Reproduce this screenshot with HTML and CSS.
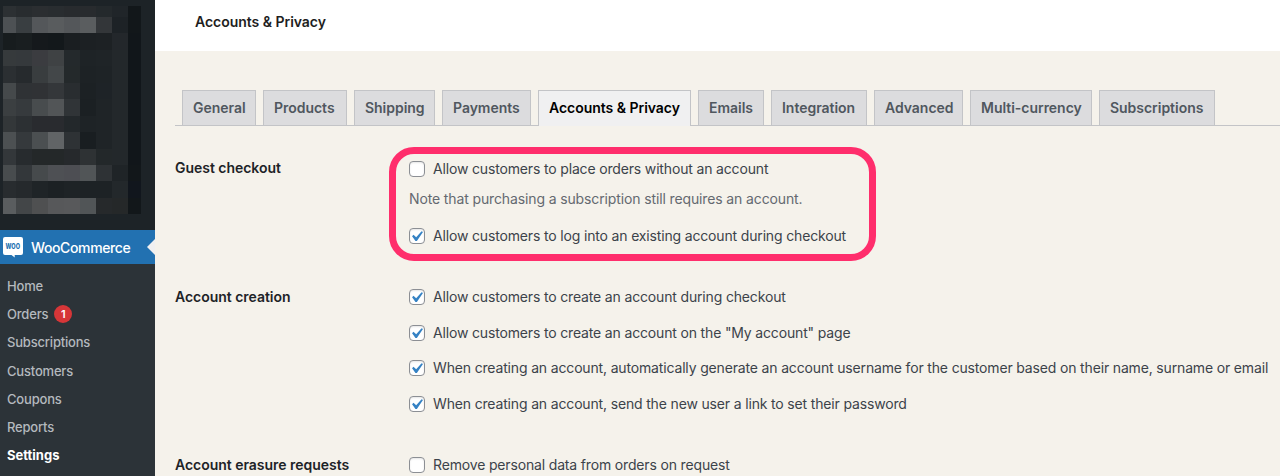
FILE: index.html
```html
<!DOCTYPE html>
<html lang="en">
<head>
<meta charset="utf-8">
<title>Accounts &amp; Privacy</title>
<link rel="stylesheet" href="styles.css">
</head>
<body>
<svg class="sprite" width="0" height="0"><symbol id="tick" viewBox="0 0 20 20"><path d="M14.830 4.890l1.340.940-5.810 8.380H9.020L5.780 9.670l1.340-1.250 2.570 2.400z"/></symbol></svg>
<div class="app">
  <aside class="sidebar">
    <div class="mosaic" id="mosaic"></div>
    <a class="brand">
      <svg class="brand-icon" width="20" height="21" viewBox="0 0 20 21"><path fill="#fff" d="M2 0h16a2 2 0 0 1 2 2v14a2 2 0 0 1-2 2h-6.300v2.500L8.500 18H2a2 2 0 0 1-2-2V2a2 2 0 0 1 2-2z"/><text x="2.600" y="11.500" textLength="14.400" lengthAdjust="spacingAndGlyphs">WOO</text></svg>
      <span class="brand-name">WooCommerce</span>
      <span class="brand-arrow"></span>
    </a>
    <nav class="menu">
      <a>Home</a>
      <a>Orders<b class="count">1</b></a>
      <a>Subscriptions</a>
      <a>Customers</a>
      <a>Coupons</a>
      <a>Reports</a>
      <a class="current">Settings</a>
    </nav>
  </aside>
  <main class="main">
    <header class="header"><h1>Accounts &amp; Privacy</h1></header>
    <nav class="tabs">
      <a class="w74">General</a>
      <a class="w84">Products</a>
      <a class="w81">Shipping</a>
      <a class="w89">Payments</a>
      <a class="w153 active">Accounts &amp; Privacy</a>
      <a class="w66">Emails</a>
      <a class="w96">Integration</a>
      <a class="w89">Advanced</a>
      <a class="w122">Multi-currency</a>
      <a class="w116">Subscriptions</a>
    </nav>
    <section class="group guest">
      <h2>Guest checkout</h2>
      <div class="fields">
        <label><i class="box"></i>Allow customers to place orders without an account</label>
        <p>Note that purchasing a subscription still requires an account.</p>
        <label><i class="box"><svg><use href="#tick"/></svg></i>Allow customers to log into an existing account during checkout</label>
        <div class="highlight"></div>
      </div>
    </section>
    <section class="group creation">
      <h2>Account creation</h2>
      <div class="fields">
        <label><i class="box"><svg><use href="#tick"/></svg></i>Allow customers to create an account during checkout</label>
        <label><i class="box"><svg><use href="#tick"/></svg></i>Allow customers to create an account on the "My account" page</label>
        <label><i class="box"><svg><use href="#tick"/></svg></i>When creating an account, automatically generate an account username for the customer based on their name, surname or email</label>
        <label><i class="box"><svg><use href="#tick"/></svg></i>When creating an account, send the new user a link to set their password</label>
      </div>
    </section>
    <section class="group erasure">
      <h2>Account erasure requests</h2>
      <div class="fields">
        <label><i class="box"></i>Remove personal data from orders on request</label>
      </div>
    </section>
  </main>
</div>
<script src="app.js"></script>
</body>
</html>
```

FILE: styles.css
```css
* { box-sizing: border-box; }
body { margin: 0; background: #f5f2eb; font: 14px/20px Inter, "Liberation Sans", sans-serif; color: #3c434a; }
h1, h2, p { margin: 0; font-size: 14px; }
.sprite { position: absolute; }
.app { display: flex; width: 1280px; height: 476px; overflow: hidden; }
.sidebar { width: 155px; flex: none; background: #1d2327; padding-top: 6px; display: flex; flex-direction: column; }
.mosaic { flex: none; margin-left: 3px; width: 138px; height: 208.500px; display: grid; grid-template-columns: 13px repeat(7, 16px) 13px; grid-template-rows: 11px repeat(12, 16.450px); }
.brand { position: relative; flex: none; display: flex; align-items: center; height: 34px; margin-top: 15.500px; padding-left: 3px; background: #2271b1; color: #fff; }
.brand-icon { display: block; overflow: visible; }
.brand-icon text { font: 800 7.500px Inter, sans-serif; fill: #2271b1; }
.brand-name { margin: 1px 0 0 8px; font-weight: 500; letter-spacing: -0.380px; }
.brand-arrow { position: absolute; right: 0; top: 9px; border: 8px solid transparent; border-left: 0; border-right-color: #f0f0f1; }
.menu { flex: 1; min-height: 0; background: #2c3338; padding: 8px 7px 0; font-size: 13px; font-weight: 500; letter-spacing: -0.190px; color: #b4b9be; }
.menu a { display: flex; align-items: center; height: 28.170px; }
.menu .current { color: #fff; font-weight: 700; letter-spacing: 0; }
.count { width: 18px; height: 18px; margin-left: 6px; border-radius: 50%; background: #d63638; color: #fff; font-size: 11px; line-height: 18px; text-align: center; font-weight: 600; }
.main { flex: 1; min-width: 0; }
.header { height: 51px; background: #fff; padding: 12px 0 0 40px; color: #1e1e1e; }
h1 { font-weight: 600; letter-spacing: -0.030px; }
.tabs { display: flex; gap: 7px; margin: 39px 0 0 20px; padding-left: 7px; height: 36px; border-bottom: 1px solid #c3c4c7; }
.tabs a { flex: none; height: 35px; border: 1px solid #c3c4c7; border-bottom: 0; background: #dcdcde; color: #50575e; font-weight: 600; letter-spacing: -0.030px; padding: 7px 0 0 10px; white-space: nowrap; }
.tabs .active { height: 36px; background: #f0f0f1; color: #000; }
.w66 { width: 66px; }
.w74 { width: 74px; }
.w81 { width: 81px; }
.w84 { width: 84px; }
.w89 { width: 89px; }
.w96 { width: 96px; }
.w116 { width: 116px; }
.w122 { width: 122px; }
.w153 { width: 153px; }
.group { display: flex; padding-left: 20px; }
.group h2 { width: 234px; flex: none; margin-top: -1px; font-weight: 600; color: #1d2327; letter-spacing: -0.030px; }
.creation h2, .erasure h2 { margin-top: 0; }
.fields { position: relative; display: flex; flex-direction: column; white-space: nowrap; letter-spacing: -0.160px; }
.fields label { display: flex; align-items: center; height: 20px; }
.fields p { margin: 10px 0 17px; color: #646970; letter-spacing: -0.127px; }
.box { flex: none; width: 16px; height: 16px; border: 1px solid #8c8f94; border-radius: 4px; background: #fff; margin-right: 8px; box-shadow: inset 0 1px 2px rgba(0, 0, 0, 0.1); }
.box svg { display: block; width: 21px; height: 21px; margin: -3px 0 0 -4px; fill: #3582c4; }
.guest { padding-top: 33px; }
.creation { padding-top: 41px; }
.creation .fields { gap: 15.670px; }
.erasure { padding-top: 41px; }
.highlight { position: absolute; left: -20px; top: -12.500px; width: 487px; height: 114.500px; border: 7px solid #ff2e6c; border-radius: 25px; }
```

FILE: app.js
```js
// Tile shades of the pixelated site menu, row by row.
const rows = [
  "2c3033 282c2f 2b2e31 292d30 282b2e 282b2e 24292c 202529 12171a",
  "4d5154 393e41 54575a 595c5e 54575a 5a5d5f 333639 1d2226 12171a",
  "171c1e 191e20 15191c 13181b 1a1e21 1c2023 1d2124 23272b 11161a",
  "363a3c 35393c 3b3c40 3f4244 24292c 1e2326 1f2427 23282b 11161a",
  "2b2f32 262a2d 393d3f 434749 24292b 1d2225 1e2326 23282b 11161a",
  "45494b 2f3235 303235 34373a 292d30 1c2124 1e2327 23282b 11161a",
  "3b3f41 363a3d 484c4e 525557 303437 1b2023 1f2427 23282b 11161a",
  "333739 2c3033 292b2f 292b2f 23282b 1e2326 1f2427 23282b 11161a",
  "4c5052 35393c 4b4f51 616466 2e3235 191e21 1f2427 23282b 11161a",
  "33373a 272b2e 242829 242829 26292c 2e3234 23282a 23282b 11161a",
  "484c4e 33373a 464a4c 4e5054 4d4e53 515557 2e3235 1f2427 12171a",
  "282c2f 25292c 1f2427 1c2124 1e2326 1d2225 1d2225 23282b 11161d",
  "5a5d5f 434648 4f5051 57585a 58595b 515557 26292b 252829 12171a"
];
const mosaic = document.getElementById("mosaic");
for (const shade of rows.join(" ").split(" ")) {
  const tile = document.createElement("i");
  tile.style.background = "#" + shade;
  mosaic.append(tile);
}
```
